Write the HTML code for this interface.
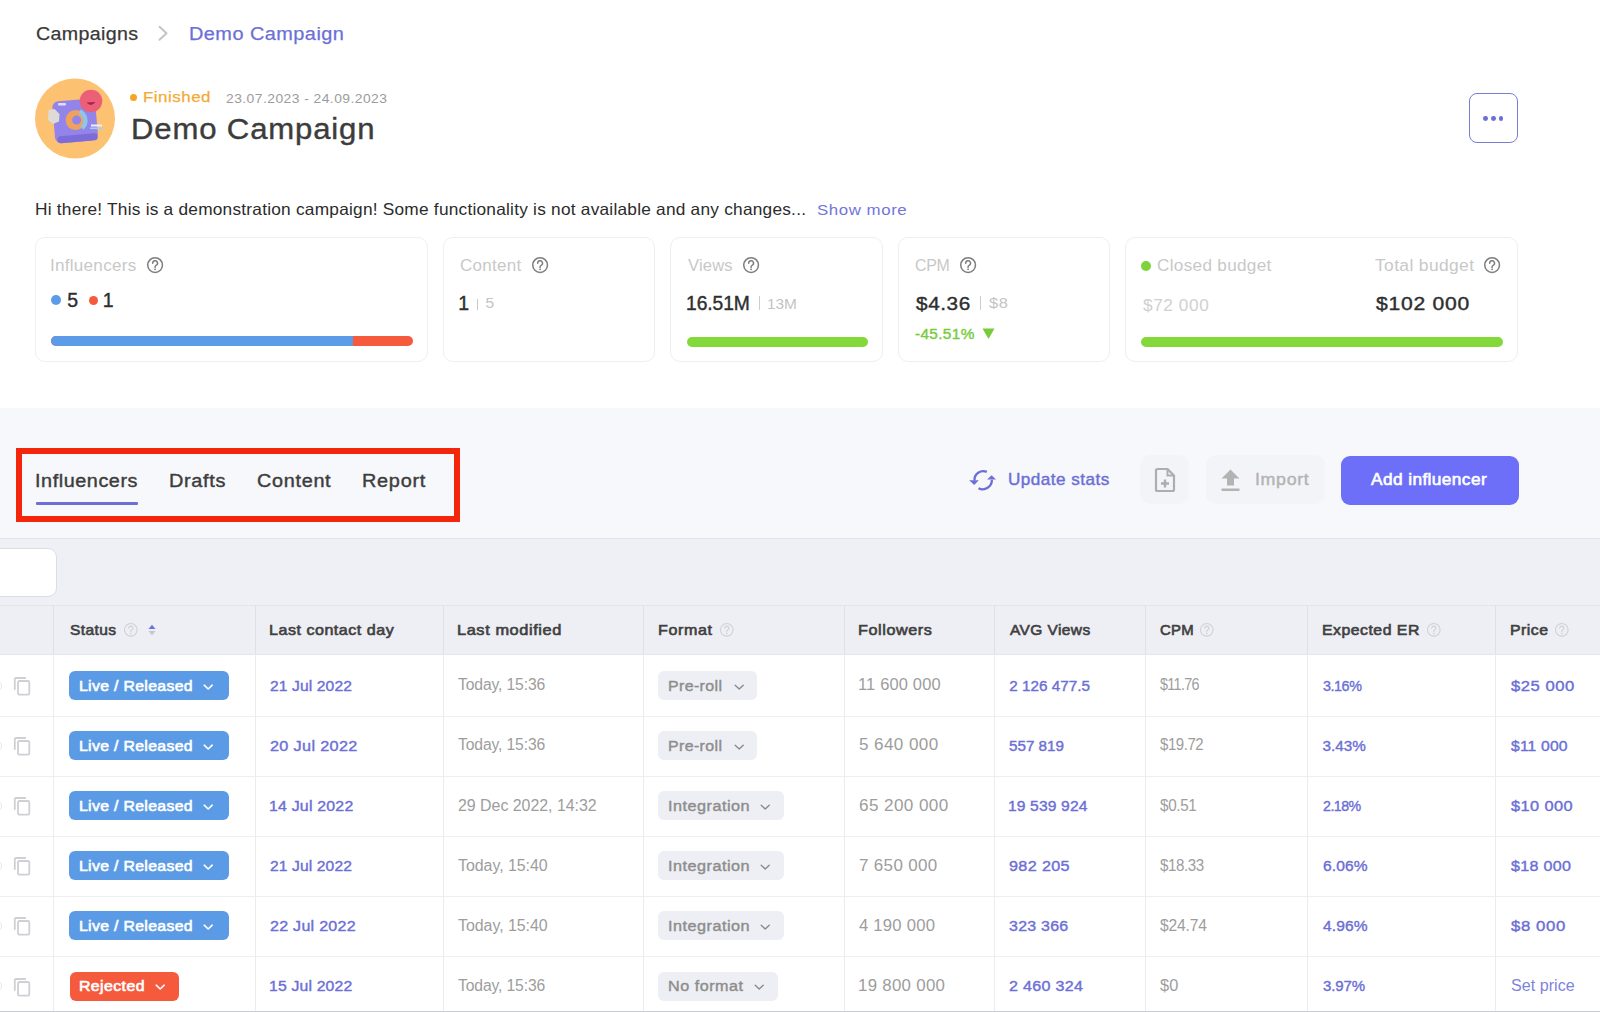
<!DOCTYPE html>
<html><head><meta charset="utf-8">
<style>
html,body{margin:0;padding:0;}
body{width:1600px;height:1012px;overflow:hidden;position:relative;background:#fff;font-family:"Liberation Sans",sans-serif;}
.t{position:absolute;white-space:nowrap;transform-origin:0 0;font-family:"Liberation Sans",sans-serif;}
.a{position:absolute;}
.card{position:absolute;top:237px;height:125px;border:1px solid #efeff1;border-radius:10px;box-sizing:border-box;background:#fff;}
.bar{position:absolute;height:10px;border-radius:5px;}
.q{position:absolute;width:16px;height:16px;}
.vl{position:absolute;width:1px;background:#ececf0;}
.hl{position:absolute;height:1px;background:#edeef1;left:0;width:1600px;}
.pill{position:absolute;height:29px;border-radius:6px;}
</style></head><body>
<!-- breadcrumb chevron -->
<svg class="a" style="left:156px;top:24px" width="14" height="18" viewBox="0 0 14 18"><polyline points="3.5,2.8 10.5,9.2 3.5,15.8" fill="none" stroke="#c4c4c4" stroke-width="2" stroke-linecap="round" stroke-linejoin="round"/></svg>

<!-- avatar -->
<svg class="a" style="left:35px;top:78px" width="80" height="81" viewBox="0 0 80 81">
<circle cx="40" cy="40.5" r="40" fill="#fdc172"/>
<g transform="rotate(-5 39 41)">
<rect x="18.5" y="22" width="43" height="42" rx="6" fill="#9384ea"/>
<rect x="21" y="57" width="40" height="7" rx="3" fill="#7b6cd8"/>
</g>
<rect x="23" y="25" width="8" height="2.5" rx="1" fill="#e2dcff"/>
<path d="M13.5 32 L19.5 31 L24.5 36 L24 43.5 L18 46 L13 42 Z" fill="#dedad6"/>
<circle cx="40.6" cy="42.1" r="10" fill="#f0a25c"/>
<circle cx="41.6" cy="42.1" r="4.5" fill="#9384ea"/>
<path d="M44.5 33.5 a10 10 0 0 1 2.5 16.5" stroke="#8cc6e8" stroke-width="4.5" fill="none"/>
<circle cx="56" cy="23" r="11.3" fill="#ec5f78"/>
<path d="M51.5 24.5 q4.5 5 9 -0.5 z" fill="#a8234a"/>
<rect x="56" y="46.5" width="11" height="2" fill="#e8f0ff"/>
<rect x="55" y="49.5" width="13" height="1.6" fill="#9dd3ef"/>
</svg>
<!-- dots button -->
<div class="a" style="left:1468.5px;top:93px;width:49.5px;height:49.75px;border:1.6px solid #7a7dd6;border-radius:8px;box-sizing:border-box;"></div>
<div class="a" style="left:1483.4px;top:116px;width:4.8px;height:4.8px;border-radius:50%;background:#6b6fd6"></div>
<div class="a" style="left:1491.1px;top:116px;width:4.8px;height:4.8px;border-radius:50%;background:#6b6fd6"></div>
<div class="a" style="left:1498.6px;top:116px;width:4.8px;height:4.8px;border-radius:50%;background:#6b6fd6"></div>

<!-- status dot -->
<div class="a" style="left:130px;top:93.5px;width:7px;height:7px;border-radius:50%;background:#f5a623"></div>

<!-- cards -->
<div class="card" style="left:35px;width:393px;"></div>
<div class="card" style="left:443px;width:212px;"></div>
<div class="card" style="left:670px;width:213px;"></div>
<div class="card" style="left:898px;width:212px;"></div>
<div class="card" style="left:1125px;width:393px;"></div>

<!-- card decorations -->
<div class="a" style="left:50.7px;top:294.8px;width:10.4px;height:10.4px;border-radius:50%;background:#5b9be8"></div>
<div class="a" style="left:88.5px;top:295.6px;width:9.3px;height:9.3px;border-radius:50%;background:#f55a3c"></div>
<div class="bar" style="left:51px;top:336.4px;width:361.5px;background:#f55a3c"></div>
<div class="bar" style="left:51px;top:336.4px;width:302px;background:#5b9be8;border-radius:5px 0 0 5px"></div>
<div class="bar" style="left:687px;top:336.5px;width:181px;background:#84d93a"></div>
<div class="bar" style="left:1141px;top:336.5px;width:362px;background:#84d93a"></div>
<div class="a" style="left:1141px;top:260.5px;width:10px;height:10px;border-radius:50%;background:#7ed23a"></div>
<div class="a" style="left:476.5px;top:299px;width:1.4px;height:10.5px;background:#c8c8c8"></div>
<div class="a" style="left:758.5px;top:295.5px;width:1.4px;height:14px;background:#cdcdcd"></div>
<div class="a" style="left:980px;top:295.5px;width:1.4px;height:14px;background:#cdcdcd"></div>
<svg class="a" style="left:982px;top:328px" width="13" height="12" viewBox="0 0 13 12"><polygon points="0.5,0.5 12.5,0.5 6.5,11" fill="#77cc3c"/></svg>

<svg class="a" style="left:145.90px;top:255.90px" width="18.20" height="18.20" viewBox="0 0 18 18"><circle cx="9" cy="9" r="7.3" fill="none" stroke="#7d7d7d" stroke-width="1.48"/><path d="M6.6 7.1 a2.4 2.4 0 1 1 3.4 2.2 c-0.7 0.35 -1 0.8 -1 1.5 v0.5" fill="none" stroke="#7d7d7d" stroke-width="1.48" stroke-linecap="round"/><circle cx="9" cy="13.2" r="0.9" fill="#7d7d7d"/></svg>
<svg class="a" style="left:531.00px;top:255.90px" width="18.20" height="18.20" viewBox="0 0 18 18"><circle cx="9" cy="9" r="7.3" fill="none" stroke="#7d7d7d" stroke-width="1.48"/><path d="M6.6 7.1 a2.4 2.4 0 1 1 3.4 2.2 c-0.7 0.35 -1 0.8 -1 1.5 v0.5" fill="none" stroke="#7d7d7d" stroke-width="1.48" stroke-linecap="round"/><circle cx="9" cy="13.2" r="0.9" fill="#7d7d7d"/></svg>
<svg class="a" style="left:741.90px;top:255.90px" width="18.20" height="18.20" viewBox="0 0 18 18"><circle cx="9" cy="9" r="7.3" fill="none" stroke="#7d7d7d" stroke-width="1.48"/><path d="M6.6 7.1 a2.4 2.4 0 1 1 3.4 2.2 c-0.7 0.35 -1 0.8 -1 1.5 v0.5" fill="none" stroke="#7d7d7d" stroke-width="1.48" stroke-linecap="round"/><circle cx="9" cy="13.2" r="0.9" fill="#7d7d7d"/></svg>
<svg class="a" style="left:958.60px;top:255.90px" width="18.20" height="18.20" viewBox="0 0 18 18"><circle cx="9" cy="9" r="7.3" fill="none" stroke="#7d7d7d" stroke-width="1.48"/><path d="M6.6 7.1 a2.4 2.4 0 1 1 3.4 2.2 c-0.7 0.35 -1 0.8 -1 1.5 v0.5" fill="none" stroke="#7d7d7d" stroke-width="1.48" stroke-linecap="round"/><circle cx="9" cy="13.2" r="0.9" fill="#7d7d7d"/></svg>
<svg class="a" style="left:1483.40px;top:255.90px" width="18.20" height="18.20" viewBox="0 0 18 18"><circle cx="9" cy="9" r="7.3" fill="none" stroke="#7d7d7d" stroke-width="1.48"/><path d="M6.6 7.1 a2.4 2.4 0 1 1 3.4 2.2 c-0.7 0.35 -1 0.8 -1 1.5 v0.5" fill="none" stroke="#7d7d7d" stroke-width="1.48" stroke-linecap="round"/><circle cx="9" cy="13.2" r="0.9" fill="#7d7d7d"/></svg>

<div class="t" style="left:36.12px;top:25.10px;font-size:18.75px;line-height:18.75px;font-weight:400;color:#383838;letter-spacing:0.348px;transform:scaleX(1.0463);-webkit-text-stroke:0.25px #383838;">Campaigns</div>
<div class="t" style="left:189.06px;top:25.10px;font-size:18.75px;line-height:18.75px;font-weight:400;color:#6b6fd6;letter-spacing:0.443px;transform:scaleX(1.0607);-webkit-text-stroke:0.25px #6b6fd6;">Demo Campaign</div>
<div class="t" style="left:142.63px;top:89.00px;font-size:15.5px;line-height:15.5px;font-weight:400;color:#f2ab35;letter-spacing:0.459px;transform:scaleX(1.0925);-webkit-text-stroke:0.25px #f2ab35;">Finished</div>
<div class="t" style="left:226.20px;top:92.60px;font-size:12.5px;line-height:12.5px;font-weight:400;color:#9c9c9c;letter-spacing:0.405px;transform:scaleX(1.1088);">23.07.2023 - 24.09.2023</div>
<div class="t" style="left:130.66px;top:115.40px;font-size:29px;line-height:29px;font-weight:400;color:#3c3c3c;letter-spacing:0.800px;transform:scaleX(1.0720);-webkit-text-stroke:0.40px #3c3c3c;">Demo Campaign</div>
<div class="t" style="left:35.20px;top:200.90px;font-size:16.5px;line-height:16.5px;font-weight:400;color:#2b2b2b;letter-spacing:0.220px;transform:scaleX(1.0469);">Hi there! This is a demonstration campaign! Some functionality is not available and any changes...</div>
<div class="t" style="left:816.60px;top:201.90px;font-size:15.5px;line-height:15.5px;font-weight:400;color:#7275da;letter-spacing:0.517px;transform:scaleX(1.0866);">Show more</div>
<div class="t" style="left:50.45px;top:256.60px;font-size:16.25px;line-height:16.25px;font-weight:400;color:#c8c8c8;letter-spacing:0.253px;transform:scaleX(1.0508);">Influencers</div>
<div class="t" style="left:460.40px;top:256.60px;font-size:16.25px;line-height:16.25px;font-weight:400;color:#c8c8c8;letter-spacing:0.274px;transform:scaleX(1.0449);">Content</div>
<div class="t" style="left:687.50px;top:256.60px;font-size:16.25px;line-height:16.25px;font-weight:400;color:#c8c8c8;letter-spacing:0.154px;transform:scaleX(1.0220);">Views</div>
<div class="t" style="left:914.80px;top:256.50px;font-size:16.25px;line-height:16.25px;font-weight:400;color:#c8c8c8;letter-spacing:-0.260px;transform:scaleX(0.9785);">CPM</div>
<div class="t" style="left:1157.20px;top:256.50px;font-size:16.25px;line-height:16.25px;font-weight:400;color:#c8c8c8;letter-spacing:0.301px;transform:scaleX(1.0542);">Closed budget</div>
<div class="t" style="left:1375.00px;top:256.50px;font-size:16.25px;line-height:16.25px;font-weight:400;color:#c8c8c8;letter-spacing:0.356px;transform:scaleX(1.0706);">Total budget</div>
<div class="t" style="left:67.20px;top:291.10px;font-size:19.5px;line-height:19.5px;font-weight:400;color:#2e2e2e;letter-spacing:0.000px;-webkit-text-stroke:0.40px #2e2e2e;">5</div>
<div class="t" style="left:102.80px;top:291.10px;font-size:19.5px;line-height:19.5px;font-weight:400;color:#2e2e2e;letter-spacing:0.000px;-webkit-text-stroke:0.40px #2e2e2e;">1</div>
<div class="t" style="left:458.30px;top:293.90px;font-size:19.5px;line-height:19.5px;font-weight:400;color:#2e2e2e;letter-spacing:0.000px;-webkit-text-stroke:0.40px #2e2e2e;">1</div>
<div class="t" style="left:686.21px;top:293.70px;font-size:19.5px;line-height:19.5px;font-weight:400;color:#2e2e2e;letter-spacing:-0.097px;transform:scaleX(0.9886);-webkit-text-stroke:0.40px #2e2e2e;">16.51M</div>
<div class="t" style="left:915.50px;top:293.80px;font-size:19.25px;line-height:19.25px;font-weight:400;color:#2e2e2e;letter-spacing:0.561px;transform:scaleX(1.0763);-webkit-text-stroke:0.40px #2e2e2e;">$4.36</div>
<div class="t" style="left:1375.70px;top:293.80px;font-size:19.25px;line-height:19.25px;font-weight:400;color:#2e2e2e;letter-spacing:0.677px;transform:scaleX(1.0981);-webkit-text-stroke:0.40px #2e2e2e;">$102 000</div>
<div class="t" style="left:485.40px;top:294.80px;font-size:15.5px;line-height:15.5px;font-weight:400;color:#c3c3c3;letter-spacing:0.000px;">5</div>
<div class="t" style="left:767.01px;top:295.50px;font-size:15.5px;line-height:15.5px;font-weight:400;color:#c3c3c3;letter-spacing:-0.048px;transform:scaleX(0.9949);">13M</div>
<div class="t" style="left:988.90px;top:294.80px;font-size:15.5px;line-height:15.5px;font-weight:400;color:#c3c3c3;letter-spacing:0.633px;transform:scaleX(1.0606);">$8</div>
<div class="t" style="left:1142.50px;top:297.50px;font-size:15.75px;line-height:15.75px;font-weight:400;color:#d0d0d0;letter-spacing:0.539px;transform:scaleX(1.0926);">$72 000</div>
<div class="t" style="left:915.00px;top:326.80px;font-size:14.5px;line-height:14.5px;font-weight:400;color:#77cc3c;letter-spacing:0.333px;transform:scaleX(1.0586);-webkit-text-stroke:0.40px #77cc3c;">-45.51%</div>

<!-- gray section -->
<div class="a" style="left:0;top:407.5px;width:1600px;height:131px;background:#f7f8fb"></div>
<div class="a" style="left:0;top:538px;width:1600px;height:1px;background:#e2e3e8"></div>
<div class="a" style="left:0;top:539px;width:1600px;height:473px;background:#eff0f5"></div>

<!-- tab underline -->
<div class="a" style="left:35.5px;top:502px;width:102.5px;height:2.5px;border-radius:1px;background:#6b6fd6"></div>
<!-- red box -->
<div class="a" style="left:16px;top:448px;width:443.5px;height:73.5px;border:6.5px solid #f3260c;box-sizing:border-box"></div>

<!-- buttons -->
<svg class="a" style="left:968px;top:468px" width="30" height="23" viewBox="0 0 30 23">
<path d="M18.8 3.9 A8.8 8.8 0 0 0 6.5 12.6" fill="none" stroke="#6b6fd6" stroke-width="2.3"/>
<path d="M10.5 20.2 A9.2 9.2 0 0 0 23.9 11.8" fill="none" stroke="#6b6fd6" stroke-width="2.3"/>
<polygon points="1.2,12.2 10.8,12.2 6.2,16.9" fill="#6b6fd6"/>
<polygon points="19.1,11.6 28,11.6 23.6,7.3" fill="#6b6fd6"/>
</svg>
<div class="a" style="left:1140px;top:455px;width:49px;height:49px;border-radius:10px;background:#f3f4f7"></div>
<svg class="a" style="left:1154px;top:467px" width="23" height="26" viewBox="0 0 23 26">
<path d="M3.5 2 H13.5 L20 8.5 V22.5 a1.5 1.5 0 0 1 -1.5 1.5 H3.5 a1.5 1.5 0 0 1 -1.5 -1.5 V3.5 a1.5 1.5 0 0 1 1.5 -1.5 Z" fill="none" stroke="#adadad" stroke-width="2.2" stroke-linejoin="round"/>
<path d="M13.5 2 V8.5 H20" fill="none" stroke="#adadad" stroke-width="2"/>
<path d="M11 12.5 V20.5 M7 16.5 H15" stroke="#adadad" stroke-width="2.4"/>
</svg>
<div class="a" style="left:1206px;top:455px;width:118.5px;height:49px;border-radius:10px;background:#f3f4f7"></div>
<svg class="a" style="left:1220px;top:468px" width="21" height="24" viewBox="0 0 21 24">
<polygon points="10.5,1.5 19.5,10.5 14,10.5 14,17.5 7,17.5 7,10.5 1.5,10.5" fill="#b3b3b3"/>
<rect x="1.5" y="20.5" width="18" height="2.5" fill="#b3b3b3"/>
</svg>
<div class="a" style="left:1341px;top:455.5px;width:177.5px;height:49px;border-radius:9px;background:#6d6ff9"></div>

<div class="t" style="left:35.30px;top:472.00px;font-size:18px;line-height:18px;font-weight:400;color:#3d3d3d;letter-spacing:0.522px;transform:scaleX(1.0989);-webkit-text-stroke:0.40px #3d3d3d;">Influencers</div>
<div class="t" style="left:168.79px;top:472.00px;font-size:18px;line-height:18px;font-weight:400;color:#3d3d3d;letter-spacing:0.600px;transform:scaleX(1.1059);-webkit-text-stroke:0.40px #3d3d3d;">Drafts</div>
<div class="t" style="left:257.45px;top:472.00px;font-size:18px;line-height:18px;font-weight:400;color:#3d3d3d;letter-spacing:0.640px;transform:scaleX(1.1005);-webkit-text-stroke:0.40px #3d3d3d;">Content</div>
<div class="t" style="left:362.30px;top:472.00px;font-size:18px;line-height:18px;font-weight:400;color:#3d3d3d;letter-spacing:0.665px;transform:scaleX(1.1038);-webkit-text-stroke:0.40px #3d3d3d;">Report</div>
<div class="t" style="left:1008.11px;top:471.60px;font-size:15.75px;line-height:15.75px;font-weight:400;color:#6b6fd6;letter-spacing:0.426px;transform:scaleX(1.0874);-webkit-text-stroke:0.40px #6b6fd6;">Update stats</div>
<div class="t" style="left:1255.39px;top:471.80px;font-size:16px;line-height:16px;font-weight:400;color:#b3b3b3;letter-spacing:0.604px;transform:scaleX(1.1123);-webkit-text-stroke:0.40px #b3b3b3;">Import</div>
<div class="t" style="left:1371.30px;top:471.80px;font-size:16px;line-height:16px;font-weight:400;color:#ffffff;letter-spacing:0.383px;transform:scaleX(1.0783);-webkit-text-stroke:0.60px #ffffff;">Add influencer</div>

<!-- table area -->
<div class="a" style="left:-10px;top:548px;width:66.5px;height:49px;background:#fff;border:1px solid #dcdee4;border-radius:9px;box-sizing:border-box"></div>
<div class="a" style="left:0;top:605px;width:1600px;height:49.5px;background:#eeeff4"></div>
<div class="a" style="left:0;top:654.5px;width:1600px;height:356px;background:#fff"></div>
<div class="hl" style="top:605px;background:#e4e5ea"></div>
<div class="hl" style="top:654px;background:#e4e5ea"></div>
<div class="hl" style="top:715.5px"></div>
<div class="hl" style="top:775.8px"></div>
<div class="hl" style="top:835.9px"></div>
<div class="hl" style="top:896.0px"></div>
<div class="hl" style="top:956.2px"></div>
<div class="hl" style="top:1010.5px;height:1.5px;background:#c9cacf"></div>
<div class="vl" style="left:53.0px;top:605px;height:49px;background:#dfe0e6"></div>
<div class="vl" style="left:53.0px;top:654px;height:357px;background:#ebecef"></div>
<div class="vl" style="left:255.0px;top:605px;height:49px;background:#dfe0e6"></div>
<div class="vl" style="left:255.0px;top:654px;height:357px;background:#ebecef"></div>
<div class="vl" style="left:443.0px;top:605px;height:49px;background:#dfe0e6"></div>
<div class="vl" style="left:443.0px;top:654px;height:357px;background:#ebecef"></div>
<div class="vl" style="left:643.0px;top:605px;height:49px;background:#dfe0e6"></div>
<div class="vl" style="left:643.0px;top:654px;height:357px;background:#ebecef"></div>
<div class="vl" style="left:844.0px;top:605px;height:49px;background:#dfe0e6"></div>
<div class="vl" style="left:844.0px;top:654px;height:357px;background:#ebecef"></div>
<div class="vl" style="left:994.0px;top:605px;height:49px;background:#dfe0e6"></div>
<div class="vl" style="left:994.0px;top:654px;height:357px;background:#ebecef"></div>
<div class="vl" style="left:1145.0px;top:605px;height:49px;background:#dfe0e6"></div>
<div class="vl" style="left:1145.0px;top:654px;height:357px;background:#ebecef"></div>
<div class="vl" style="left:1307.0px;top:605px;height:49px;background:#dfe0e6"></div>
<div class="vl" style="left:1307.0px;top:654px;height:357px;background:#ebecef"></div>
<div class="vl" style="left:1495.0px;top:605px;height:49px;background:#dfe0e6"></div>
<div class="vl" style="left:1495.0px;top:654px;height:357px;background:#ebecef"></div>
<div class="pill" style="left:69px;top:671.0px;width:159.5px;background:#5b9be6"></div>
<svg class="a" style="left:203.0px;top:683.5px" width="11" height="7" viewBox="0 0 11 7"><polyline points="1.2,1.2 5.2,5 9.2,1.2" fill="none" stroke="#fff" stroke-width="1.6" stroke-linecap="round" stroke-linejoin="round"/></svg>
<div class="pill" style="left:658px;top:671.0px;width:99px;background:#eeeff4"></div>
<svg class="a" style="left:733.5px;top:683.7px" width="11" height="7" viewBox="0 0 11 7"><polyline points="1.2,1.2 5.2,5 9.2,1.2" fill="none" stroke="#8a8a8a" stroke-width="1.4" stroke-linecap="round" stroke-linejoin="round"/></svg>
<svg class="a" style="left:13px;top:676.0px" width="18" height="20" viewBox="0 0 18 20"><path d="M1.8 13 V3 a1 1 0 0 1 1 -1 H12.3" fill="none" stroke="#cfd0d6" stroke-width="1.8" stroke-linecap="round"/><rect x="5" y="5" width="11.3" height="13.6" rx="1.6" fill="none" stroke="#cfd0d6" stroke-width="1.8"/></svg>
<div class="a" style="left:-8px;top:680.5px;width:9.5px;height:10px;border-radius:50%;border:1.5px solid #e6e7eb;box-sizing:border-box"></div>
<div class="pill" style="left:69px;top:731.1px;width:159.5px;background:#5b9be6"></div>
<svg class="a" style="left:203.0px;top:743.6px" width="11" height="7" viewBox="0 0 11 7"><polyline points="1.2,1.2 5.2,5 9.2,1.2" fill="none" stroke="#fff" stroke-width="1.6" stroke-linecap="round" stroke-linejoin="round"/></svg>
<div class="pill" style="left:658px;top:731.1px;width:99px;background:#eeeff4"></div>
<svg class="a" style="left:733.5px;top:743.8px" width="11" height="7" viewBox="0 0 11 7"><polyline points="1.2,1.2 5.2,5 9.2,1.2" fill="none" stroke="#8a8a8a" stroke-width="1.4" stroke-linecap="round" stroke-linejoin="round"/></svg>
<svg class="a" style="left:13px;top:736.1px" width="18" height="20" viewBox="0 0 18 20"><path d="M1.8 13 V3 a1 1 0 0 1 1 -1 H12.3" fill="none" stroke="#cfd0d6" stroke-width="1.8" stroke-linecap="round"/><rect x="5" y="5" width="11.3" height="13.6" rx="1.6" fill="none" stroke="#cfd0d6" stroke-width="1.8"/></svg>
<div class="a" style="left:-8px;top:740.6px;width:9.5px;height:10px;border-radius:50%;border:1.5px solid #e6e7eb;box-sizing:border-box"></div>
<div class="pill" style="left:69px;top:791.2px;width:159.5px;background:#5b9be6"></div>
<svg class="a" style="left:203.0px;top:803.7px" width="11" height="7" viewBox="0 0 11 7"><polyline points="1.2,1.2 5.2,5 9.2,1.2" fill="none" stroke="#fff" stroke-width="1.6" stroke-linecap="round" stroke-linejoin="round"/></svg>
<div class="pill" style="left:658px;top:791.2px;width:126px;background:#eeeff4"></div>
<svg class="a" style="left:760.0px;top:803.9px" width="11" height="7" viewBox="0 0 11 7"><polyline points="1.2,1.2 5.2,5 9.2,1.2" fill="none" stroke="#8a8a8a" stroke-width="1.4" stroke-linecap="round" stroke-linejoin="round"/></svg>
<svg class="a" style="left:13px;top:796.2px" width="18" height="20" viewBox="0 0 18 20"><path d="M1.8 13 V3 a1 1 0 0 1 1 -1 H12.3" fill="none" stroke="#cfd0d6" stroke-width="1.8" stroke-linecap="round"/><rect x="5" y="5" width="11.3" height="13.6" rx="1.6" fill="none" stroke="#cfd0d6" stroke-width="1.8"/></svg>
<div class="a" style="left:-8px;top:800.7px;width:9.5px;height:10px;border-radius:50%;border:1.5px solid #e6e7eb;box-sizing:border-box"></div>
<div class="pill" style="left:69px;top:851.3px;width:159.5px;background:#5b9be6"></div>
<svg class="a" style="left:203.0px;top:863.8px" width="11" height="7" viewBox="0 0 11 7"><polyline points="1.2,1.2 5.2,5 9.2,1.2" fill="none" stroke="#fff" stroke-width="1.6" stroke-linecap="round" stroke-linejoin="round"/></svg>
<div class="pill" style="left:658px;top:851.3px;width:126px;background:#eeeff4"></div>
<svg class="a" style="left:760.0px;top:864.0px" width="11" height="7" viewBox="0 0 11 7"><polyline points="1.2,1.2 5.2,5 9.2,1.2" fill="none" stroke="#8a8a8a" stroke-width="1.4" stroke-linecap="round" stroke-linejoin="round"/></svg>
<svg class="a" style="left:13px;top:856.3px" width="18" height="20" viewBox="0 0 18 20"><path d="M1.8 13 V3 a1 1 0 0 1 1 -1 H12.3" fill="none" stroke="#cfd0d6" stroke-width="1.8" stroke-linecap="round"/><rect x="5" y="5" width="11.3" height="13.6" rx="1.6" fill="none" stroke="#cfd0d6" stroke-width="1.8"/></svg>
<div class="a" style="left:-8px;top:860.8px;width:9.5px;height:10px;border-radius:50%;border:1.5px solid #e6e7eb;box-sizing:border-box"></div>
<div class="pill" style="left:69px;top:911.4px;width:159.5px;background:#5b9be6"></div>
<svg class="a" style="left:203.0px;top:923.9px" width="11" height="7" viewBox="0 0 11 7"><polyline points="1.2,1.2 5.2,5 9.2,1.2" fill="none" stroke="#fff" stroke-width="1.6" stroke-linecap="round" stroke-linejoin="round"/></svg>
<div class="pill" style="left:658px;top:911.4px;width:126px;background:#eeeff4"></div>
<svg class="a" style="left:760.0px;top:924.1px" width="11" height="7" viewBox="0 0 11 7"><polyline points="1.2,1.2 5.2,5 9.2,1.2" fill="none" stroke="#8a8a8a" stroke-width="1.4" stroke-linecap="round" stroke-linejoin="round"/></svg>
<svg class="a" style="left:13px;top:916.4px" width="18" height="20" viewBox="0 0 18 20"><path d="M1.8 13 V3 a1 1 0 0 1 1 -1 H12.3" fill="none" stroke="#cfd0d6" stroke-width="1.8" stroke-linecap="round"/><rect x="5" y="5" width="11.3" height="13.6" rx="1.6" fill="none" stroke="#cfd0d6" stroke-width="1.8"/></svg>
<div class="a" style="left:-8px;top:920.9px;width:9.5px;height:10px;border-radius:50%;border:1.5px solid #e6e7eb;box-sizing:border-box"></div>
<div class="pill" style="left:69.5px;top:971.5px;width:109px;background:#f55a3d"></div>
<svg class="a" style="left:154.5px;top:984.0px" width="11" height="7" viewBox="0 0 11 7"><polyline points="1.2,1.2 5.2,5 9.2,1.2" fill="none" stroke="#fff" stroke-width="1.6" stroke-linecap="round" stroke-linejoin="round"/></svg>
<div class="pill" style="left:658px;top:971.5px;width:120px;background:#eeeff4"></div>
<svg class="a" style="left:753.5px;top:984.2px" width="11" height="7" viewBox="0 0 11 7"><polyline points="1.2,1.2 5.2,5 9.2,1.2" fill="none" stroke="#8a8a8a" stroke-width="1.4" stroke-linecap="round" stroke-linejoin="round"/></svg>
<svg class="a" style="left:13px;top:976.5px" width="18" height="20" viewBox="0 0 18 20"><path d="M1.8 13 V3 a1 1 0 0 1 1 -1 H12.3" fill="none" stroke="#cfd0d6" stroke-width="1.8" stroke-linecap="round"/><rect x="5" y="5" width="11.3" height="13.6" rx="1.6" fill="none" stroke="#cfd0d6" stroke-width="1.8"/></svg>
<div class="a" style="left:-8px;top:981.0px;width:9.5px;height:10px;border-radius:50%;border:1.5px solid #e6e7eb;box-sizing:border-box"></div>
<svg class="a" style="left:147px;top:623px" width="10" height="14" viewBox="0 0 10 14"><polygon points="1.5,6 8.5,6 5,1.8" fill="#7074d8"/><polygon points="1.5,8 8.5,8 5,12.2" fill="#c5c6ce"/></svg>
<svg class="a" style="left:123.20px;top:622.45px" width="15.60" height="15.60" viewBox="0 0 18 18"><circle cx="9" cy="9" r="7.3" fill="none" stroke="#cfd0d8" stroke-width="1.27"/><path d="M6.6 7.1 a2.4 2.4 0 1 1 3.4 2.2 c-0.7 0.35 -1 0.8 -1 1.5 v0.5" fill="none" stroke="#cfd0d8" stroke-width="1.27" stroke-linecap="round"/><circle cx="9" cy="13.2" r="0.9" fill="#cfd0d8"/></svg>
<svg class="a" style="left:719.00px;top:622.45px" width="15.60" height="15.60" viewBox="0 0 18 18"><circle cx="9" cy="9" r="7.3" fill="none" stroke="#cfd0d8" stroke-width="1.27"/><path d="M6.6 7.1 a2.4 2.4 0 1 1 3.4 2.2 c-0.7 0.35 -1 0.8 -1 1.5 v0.5" fill="none" stroke="#cfd0d8" stroke-width="1.27" stroke-linecap="round"/><circle cx="9" cy="13.2" r="0.9" fill="#cfd0d8"/></svg>
<svg class="a" style="left:1198.90px;top:622.45px" width="15.60" height="15.60" viewBox="0 0 18 18"><circle cx="9" cy="9" r="7.3" fill="none" stroke="#cfd0d8" stroke-width="1.27"/><path d="M6.6 7.1 a2.4 2.4 0 1 1 3.4 2.2 c-0.7 0.35 -1 0.8 -1 1.5 v0.5" fill="none" stroke="#cfd0d8" stroke-width="1.27" stroke-linecap="round"/><circle cx="9" cy="13.2" r="0.9" fill="#cfd0d8"/></svg>
<svg class="a" style="left:1425.50px;top:622.45px" width="15.60" height="15.60" viewBox="0 0 18 18"><circle cx="9" cy="9" r="7.3" fill="none" stroke="#cfd0d8" stroke-width="1.27"/><path d="M6.6 7.1 a2.4 2.4 0 1 1 3.4 2.2 c-0.7 0.35 -1 0.8 -1 1.5 v0.5" fill="none" stroke="#cfd0d8" stroke-width="1.27" stroke-linecap="round"/><circle cx="9" cy="13.2" r="0.9" fill="#cfd0d8"/></svg>
<svg class="a" style="left:1554.20px;top:622.45px" width="15.60" height="15.60" viewBox="0 0 18 18"><circle cx="9" cy="9" r="7.3" fill="none" stroke="#cfd0d8" stroke-width="1.27"/><path d="M6.6 7.1 a2.4 2.4 0 1 1 3.4 2.2 c-0.7 0.35 -1 0.8 -1 1.5 v0.5" fill="none" stroke="#cfd0d8" stroke-width="1.27" stroke-linecap="round"/><circle cx="9" cy="13.2" r="0.9" fill="#cfd0d8"/></svg>

<div class="t" style="left:70.00px;top:623.10px;font-size:14.5px;line-height:14.5px;font-weight:400;color:#404040;letter-spacing:0.362px;transform:scaleX(1.0711);-webkit-text-stroke:0.60px #404040;">Status</div>
<div class="t" style="left:269.19px;top:623.10px;font-size:14.5px;line-height:14.5px;font-weight:400;color:#404040;letter-spacing:0.458px;transform:scaleX(1.1085);-webkit-text-stroke:0.60px #404040;">Last contact day</div>
<div class="t" style="left:457.17px;top:623.10px;font-size:14.5px;line-height:14.5px;font-weight:400;color:#404040;letter-spacing:0.532px;transform:scaleX(1.1266);-webkit-text-stroke:0.60px #404040;">Last modified</div>
<div class="t" style="left:657.69px;top:623.10px;font-size:14.5px;line-height:14.5px;font-weight:400;color:#404040;letter-spacing:0.579px;transform:scaleX(1.1070);-webkit-text-stroke:0.60px #404040;">Format</div>
<div class="t" style="left:857.88px;top:623.10px;font-size:14.5px;line-height:14.5px;font-weight:400;color:#404040;letter-spacing:0.525px;transform:scaleX(1.1155);-webkit-text-stroke:0.60px #404040;">Followers</div>
<div class="t" style="left:1009.80px;top:623.10px;font-size:14.5px;line-height:14.5px;font-weight:400;color:#404040;letter-spacing:0.382px;transform:scaleX(1.0682);-webkit-text-stroke:0.60px #404040;">AVG Views</div>
<div class="t" style="left:1159.80px;top:623.10px;font-size:14.5px;line-height:14.5px;font-weight:400;color:#404040;letter-spacing:0.265px;transform:scaleX(1.0261);-webkit-text-stroke:0.60px #404040;">CPM</div>
<div class="t" style="left:1321.81px;top:623.10px;font-size:14.5px;line-height:14.5px;font-weight:400;color:#404040;letter-spacing:0.460px;transform:scaleX(1.0905);-webkit-text-stroke:0.60px #404040;">Expected ER</div>
<div class="t" style="left:1509.51px;top:623.10px;font-size:14.5px;line-height:14.5px;font-weight:400;color:#404040;letter-spacing:0.443px;transform:scaleX(1.0906);-webkit-text-stroke:0.60px #404040;">Price</div>
<div class="t" style="left:78.83px;top:678.75px;font-size:14.75px;line-height:14.75px;font-weight:400;color:#ffffff;letter-spacing:0.316px;transform:scaleX(1.0707);-webkit-text-stroke:0.60px #ffffff;">Live / Released</div>
<div class="t" style="left:269.80px;top:677.75px;font-size:15.25px;line-height:15.25px;font-weight:400;color:#6b6fd6;letter-spacing:0.118px;transform:scaleX(1.0232);-webkit-text-stroke:0.40px #6b6fd6;">21 Jul 2022</div>
<div class="t" style="left:458.25px;top:677.40px;font-size:16px;line-height:16px;font-weight:400;color:#9d9d9d;letter-spacing:-0.118px;transform:scaleX(0.9789);">Today, 15:36</div>
<div class="t" style="left:667.62px;top:678.75px;font-size:14.75px;line-height:14.75px;font-weight:400;color:#8d8d8d;letter-spacing:0.335px;transform:scaleX(1.0823);-webkit-text-stroke:0.40px #8d8d8d;">Pre-roll</div>
<div class="t" style="left:857.87px;top:677.40px;font-size:16px;line-height:16px;font-weight:400;color:#9d9d9d;letter-spacing:0.160px;transform:scaleX(1.0285);">11 600 000</div>
<div class="t" style="left:1009.30px;top:677.75px;font-size:15.25px;line-height:15.25px;font-weight:400;color:#6b6fd6;letter-spacing:0.005px;-webkit-text-stroke:0.40px #6b6fd6;">2 126 477.5</div>
<div class="t" style="left:1159.70px;top:677.40px;font-size:16px;line-height:16px;font-weight:400;color:#9d9d9d;letter-spacing:-0.736px;transform:scaleX(0.8965);">$11.76</div>
<div class="t" style="left:1322.60px;top:677.75px;font-size:15.25px;line-height:15.25px;font-weight:400;color:#6b6fd6;letter-spacing:-0.466px;transform:scaleX(0.9398);-webkit-text-stroke:0.40px #6b6fd6;">3.16%</div>
<div class="t" style="left:1510.80px;top:677.75px;font-size:15.25px;line-height:15.25px;font-weight:400;color:#6b6fd6;letter-spacing:0.499px;transform:scaleX(1.0896);-webkit-text-stroke:0.40px #6b6fd6;">$25 000</div>
<div class="t" style="left:78.83px;top:738.83px;font-size:14.75px;line-height:14.75px;font-weight:400;color:#ffffff;letter-spacing:0.316px;transform:scaleX(1.0707);-webkit-text-stroke:0.60px #ffffff;">Live / Released</div>
<div class="t" style="left:269.80px;top:737.83px;font-size:15.25px;line-height:15.25px;font-weight:400;color:#6b6fd6;letter-spacing:0.317px;transform:scaleX(1.0645);-webkit-text-stroke:0.40px #6b6fd6;">20 Jul 2022</div>
<div class="t" style="left:458.25px;top:737.48px;font-size:16px;line-height:16px;font-weight:400;color:#9d9d9d;letter-spacing:-0.118px;transform:scaleX(0.9789);">Today, 15:36</div>
<div class="t" style="left:667.62px;top:738.83px;font-size:14.75px;line-height:14.75px;font-weight:400;color:#8d8d8d;letter-spacing:0.335px;transform:scaleX(1.0823);-webkit-text-stroke:0.40px #8d8d8d;">Pre-roll</div>
<div class="t" style="left:858.90px;top:737.48px;font-size:16px;line-height:16px;font-weight:400;color:#9d9d9d;letter-spacing:0.376px;transform:scaleX(1.0675);">5 640 000</div>
<div class="t" style="left:1009.30px;top:737.83px;font-size:15.25px;line-height:15.25px;font-weight:400;color:#6b6fd6;letter-spacing:-0.016px;transform:scaleX(0.9973);-webkit-text-stroke:0.40px #6b6fd6;">557 819</div>
<div class="t" style="left:1159.70px;top:737.48px;font-size:16px;line-height:16px;font-weight:400;color:#9d9d9d;letter-spacing:-0.457px;transform:scaleX(0.9347);">$19.72</div>
<div class="t" style="left:1322.60px;top:737.83px;font-size:15.25px;line-height:15.25px;font-weight:400;color:#6b6fd6;letter-spacing:0.002px;-webkit-text-stroke:0.40px #6b6fd6;">3.43%</div>
<div class="t" style="left:1510.80px;top:737.83px;font-size:15.25px;line-height:15.25px;font-weight:400;color:#6b6fd6;letter-spacing:0.161px;transform:scaleX(1.0279);-webkit-text-stroke:0.40px #6b6fd6;">$11 000</div>
<div class="t" style="left:78.83px;top:798.91px;font-size:14.75px;line-height:14.75px;font-weight:400;color:#ffffff;letter-spacing:0.316px;transform:scaleX(1.0707);-webkit-text-stroke:0.60px #ffffff;">Live / Released</div>
<div class="t" style="left:268.76px;top:797.91px;font-size:15.25px;line-height:15.25px;font-weight:400;color:#6b6fd6;letter-spacing:0.205px;transform:scaleX(1.0413);-webkit-text-stroke:0.40px #6b6fd6;">14 Jul 2022</div>
<div class="t" style="left:458.25px;top:797.56px;font-size:16px;line-height:16px;font-weight:400;color:#9d9d9d;letter-spacing:-0.024px;transform:scaleX(0.9956);">29 Dec 2022, 14:32</div>
<div class="t" style="left:667.60px;top:798.91px;font-size:14.75px;line-height:14.75px;font-weight:400;color:#8d8d8d;letter-spacing:0.425px;transform:scaleX(1.1025);-webkit-text-stroke:0.40px #8d8d8d;">Integration</div>
<div class="t" style="left:858.90px;top:797.56px;font-size:16px;line-height:16px;font-weight:400;color:#9d9d9d;letter-spacing:0.383px;transform:scaleX(1.0690);">65 200 000</div>
<div class="t" style="left:1008.28px;top:797.91px;font-size:15.25px;line-height:15.25px;font-weight:400;color:#6b6fd6;letter-spacing:0.133px;transform:scaleX(1.0242);-webkit-text-stroke:0.40px #6b6fd6;">19 539 924</div>
<div class="t" style="left:1159.70px;top:797.56px;font-size:16px;line-height:16px;font-weight:400;color:#9d9d9d;letter-spacing:-0.341px;transform:scaleX(0.9516);">$0.51</div>
<div class="t" style="left:1322.60px;top:797.91px;font-size:15.25px;line-height:15.25px;font-weight:400;color:#6b6fd6;letter-spacing:-0.546px;transform:scaleX(0.9302);-webkit-text-stroke:0.40px #6b6fd6;">2.18%</div>
<div class="t" style="left:1510.80px;top:797.91px;font-size:15.25px;line-height:15.25px;font-weight:400;color:#6b6fd6;letter-spacing:0.402px;transform:scaleX(1.0709);-webkit-text-stroke:0.40px #6b6fd6;">$10 000</div>
<div class="t" style="left:78.83px;top:858.99px;font-size:14.75px;line-height:14.75px;font-weight:400;color:#ffffff;letter-spacing:0.316px;transform:scaleX(1.0707);-webkit-text-stroke:0.60px #ffffff;">Live / Released</div>
<div class="t" style="left:269.80px;top:857.99px;font-size:15.25px;line-height:15.25px;font-weight:400;color:#6b6fd6;letter-spacing:0.118px;transform:scaleX(1.0232);-webkit-text-stroke:0.40px #6b6fd6;">21 Jul 2022</div>
<div class="t" style="left:458.25px;top:857.64px;font-size:16px;line-height:16px;font-weight:400;color:#9d9d9d;letter-spacing:-0.029px;transform:scaleX(0.9948);">Today, 15:40</div>
<div class="t" style="left:667.60px;top:858.99px;font-size:14.75px;line-height:14.75px;font-weight:400;color:#8d8d8d;letter-spacing:0.425px;transform:scaleX(1.1025);-webkit-text-stroke:0.40px #8d8d8d;">Integration</div>
<div class="t" style="left:858.90px;top:857.64px;font-size:16px;line-height:16px;font-weight:400;color:#9d9d9d;letter-spacing:0.331px;transform:scaleX(1.0591);">7 650 000</div>
<div class="t" style="left:1009.30px;top:857.99px;font-size:15.25px;line-height:15.25px;font-weight:400;color:#6b6fd6;letter-spacing:0.343px;transform:scaleX(1.0599);-webkit-text-stroke:0.40px #6b6fd6;">982 205</div>
<div class="t" style="left:1159.70px;top:857.64px;font-size:16px;line-height:16px;font-weight:400;color:#9d9d9d;letter-spacing:-0.402px;transform:scaleX(0.9420);">$18.33</div>
<div class="t" style="left:1322.60px;top:857.99px;font-size:15.25px;line-height:15.25px;font-weight:400;color:#6b6fd6;letter-spacing:0.130px;transform:scaleX(1.0181);-webkit-text-stroke:0.40px #6b6fd6;">6.06%</div>
<div class="t" style="left:1510.80px;top:857.99px;font-size:15.25px;line-height:15.25px;font-weight:400;color:#6b6fd6;letter-spacing:0.301px;transform:scaleX(1.0522);-webkit-text-stroke:0.40px #6b6fd6;">$18 000</div>
<div class="t" style="left:78.83px;top:919.07px;font-size:14.75px;line-height:14.75px;font-weight:400;color:#ffffff;letter-spacing:0.316px;transform:scaleX(1.0707);-webkit-text-stroke:0.60px #ffffff;">Live / Released</div>
<div class="t" style="left:269.80px;top:918.07px;font-size:15.25px;line-height:15.25px;font-weight:400;color:#6b6fd6;letter-spacing:0.256px;transform:scaleX(1.0515);-webkit-text-stroke:0.40px #6b6fd6;">22 Jul 2022</div>
<div class="t" style="left:458.25px;top:917.72px;font-size:16px;line-height:16px;font-weight:400;color:#9d9d9d;letter-spacing:-0.029px;transform:scaleX(0.9948);">Today, 15:40</div>
<div class="t" style="left:667.60px;top:919.07px;font-size:14.75px;line-height:14.75px;font-weight:400;color:#8d8d8d;letter-spacing:0.425px;transform:scaleX(1.1025);-webkit-text-stroke:0.40px #8d8d8d;">Integration</div>
<div class="t" style="left:858.90px;top:917.72px;font-size:16px;line-height:16px;font-weight:400;color:#9d9d9d;letter-spacing:0.227px;transform:scaleX(1.0397);">4 190 000</div>
<div class="t" style="left:1009.30px;top:918.07px;font-size:15.25px;line-height:15.25px;font-weight:400;color:#6b6fd6;letter-spacing:0.259px;transform:scaleX(1.0445);-webkit-text-stroke:0.40px #6b6fd6;">323 366</div>
<div class="t" style="left:1159.70px;top:917.72px;font-size:16px;line-height:16px;font-weight:400;color:#9d9d9d;letter-spacing:-0.167px;transform:scaleX(0.9751);">$24.74</div>
<div class="t" style="left:1322.60px;top:918.07px;font-size:15.25px;line-height:15.25px;font-weight:400;color:#6b6fd6;letter-spacing:0.130px;transform:scaleX(1.0181);-webkit-text-stroke:0.40px #6b6fd6;">4.96%</div>
<div class="t" style="left:1510.80px;top:918.07px;font-size:15.25px;line-height:15.25px;font-weight:400;color:#6b6fd6;letter-spacing:0.549px;transform:scaleX(1.0980);-webkit-text-stroke:0.40px #6b6fd6;">$8 000</div>
<div class="t" style="left:78.82px;top:979.15px;font-size:14.75px;line-height:14.75px;font-weight:400;color:#ffffff;letter-spacing:0.382px;transform:scaleX(1.0757);-webkit-text-stroke:0.60px #ffffff;">Rejected</div>
<div class="t" style="left:268.77px;top:978.15px;font-size:15.25px;line-height:15.25px;font-weight:400;color:#6b6fd6;letter-spacing:0.167px;transform:scaleX(1.0335);-webkit-text-stroke:0.40px #6b6fd6;">15 Jul 2022</div>
<div class="t" style="left:458.25px;top:977.80px;font-size:16px;line-height:16px;font-weight:400;color:#9d9d9d;letter-spacing:-0.118px;transform:scaleX(0.9789);">Today, 15:36</div>
<div class="t" style="left:667.60px;top:979.15px;font-size:14.75px;line-height:14.75px;font-weight:400;color:#8d8d8d;letter-spacing:0.463px;transform:scaleX(1.0956);-webkit-text-stroke:0.40px #8d8d8d;">No format</div>
<div class="t" style="left:857.85px;top:977.80px;font-size:16px;line-height:16px;font-weight:400;color:#9d9d9d;letter-spacing:0.288px;transform:scaleX(1.0517);">19 800 000</div>
<div class="t" style="left:1009.30px;top:978.15px;font-size:15.25px;line-height:15.25px;font-weight:400;color:#6b6fd6;letter-spacing:0.291px;transform:scaleX(1.0539);-webkit-text-stroke:0.40px #6b6fd6;">2 460 324</div>
<div class="t" style="left:1159.70px;top:977.80px;font-size:16px;line-height:16px;font-weight:400;color:#9d9d9d;letter-spacing:0.236px;transform:scaleX(1.0202);">$0</div>
<div class="t" style="left:1322.60px;top:978.15px;font-size:15.25px;line-height:15.25px;font-weight:400;color:#6b6fd6;letter-spacing:-0.110px;transform:scaleX(0.9852);-webkit-text-stroke:0.40px #6b6fd6;">3.97%</div>
<div class="t" style="left:1510.60px;top:978.15px;font-size:16px;line-height:16px;font-weight:400;color:#7f83dc;letter-spacing:0.028px;transform:scaleX(1.0053);">Set price</div>
</body></html>
